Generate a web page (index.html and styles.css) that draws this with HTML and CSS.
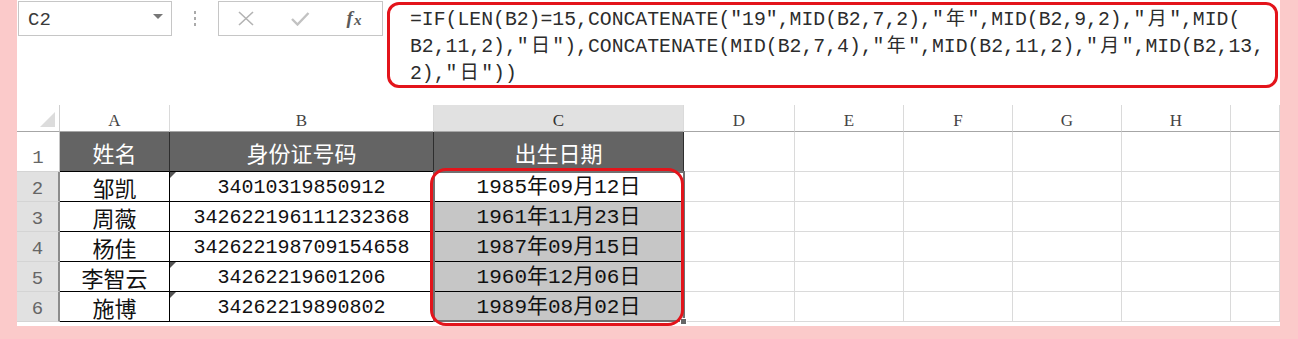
FILE: index.html
```html
<!DOCTYPE html>
<html lang="zh-CN">
<head>
<meta charset="utf-8">
<title>身份证号提取出生日期</title>
<link rel="stylesheet" href="styles.css">
</head>
<body>
<div class="panel">
  <div class="fbar">
    <div class="namebox"><span class="ref">C2</span><span class="caret"></span></div>
    <div class="grip"><i></i><i></i><i></i></div>
    <div class="fbtns">
      <span class="btn"><svg width="18" height="15" viewBox="0 0 18 15"><path d="M2 1 L16 14 M16 1 L2 14" stroke="#b3b3b3" stroke-width="1.6" fill="none"/></svg></span>
      <span class="btn"><svg width="20" height="15" viewBox="0 0 20 15"><path d="M2 8 L7.5 13.5 L18.5 2" stroke="#c2c2c2" stroke-width="2.4" fill="none"/></svg></span>
      <span class="btn fx"><i>f</i><i class="sx">x</i></span>
    </div>
    <div class="formula">
      <div class="fl">=IF(LEN(B2)=15,CONCATENATE("19",MID(B2,7,2),"<span class="w">年</span>",MID(B2,9,2),"<span class="w">月</span>",MID(</div>
      <div class="fl">B2,11,2),"<span class="w">日</span>"),CONCATENATE(MID(B2,7,4),"<span class="w">年</span>",MID(B2,11,2),"<span class="w">月</span>",MID(B2,13,</div>
      <div class="fl">2),"<span class="w">日</span>"))</div>
    </div>
  </div>

  <div class="sheet">
    <div class="cn"></div>
    <div class="ch">A</div><div class="ch">B</div><div class="ch on">C</div><div class="ch">D</div><div class="ch">E</div><div class="ch">F</div><div class="ch">G</div><div class="ch">H</div><div class="ch"></div>

    <div class="rh one">1</div>
    <div class="d t">姓名</div><div class="d t">身份证号码</div><div class="d t">出生日期</div>
    <div class="g"></div><div class="g"></div><div class="g"></div><div class="g"></div><div class="g"></div><div class="g"></div>

    <div class="rh on">2</div>
    <div class="d nm">邹凯</div><div class="d id tri">34010319850912</div><div class="d dt">1985年09月12日</div>
    <div class="g"></div><div class="g"></div><div class="g"></div><div class="g"></div><div class="g"></div><div class="g"></div>

    <div class="rh on">3</div>
    <div class="d nm">周薇</div><div class="d id">342622196111232368</div><div class="d dt s">1961年11月23日</div>
    <div class="g"></div><div class="g"></div><div class="g"></div><div class="g"></div><div class="g"></div><div class="g"></div>

    <div class="rh on">4</div>
    <div class="d nm">杨佳</div><div class="d id">342622198709154658</div><div class="d dt s">1987年09月15日</div>
    <div class="g"></div><div class="g"></div><div class="g"></div><div class="g"></div><div class="g"></div><div class="g"></div>

    <div class="rh on">5</div>
    <div class="d nm">李智云</div><div class="d id tri">34262219601206</div><div class="d dt s">1960年12月06日</div>
    <div class="g"></div><div class="g"></div><div class="g"></div><div class="g"></div><div class="g"></div><div class="g"></div>

    <div class="rh on">6</div>
    <div class="d nm">施博</div><div class="d id tri">34262219890802</div><div class="d dt s">1989年08月02日</div>
    <div class="g"></div><div class="g"></div><div class="g"></div><div class="g"></div><div class="g"></div><div class="g"></div>

    <div class="sel"></div>
    <div class="handle"></div>
    <div class="mark"></div>
  </div>
</div>
</body>
</html>
```

FILE: styles.css
```css
* { box-sizing: border-box; margin: 0; padding: 0; }

body {
  background: #fbcaca;
  width: 1298px;
  height: 339px;
  overflow: hidden;
}

.panel {
  margin-left: 17px;
  width: 1263px;
  height: 326px;
  background: #fff;
}

/* ---------- formula bar ---------- */
.fbar {
  display: flex;
  align-items: flex-start;
  height: 105px;
}

.namebox {
  margin: 1px 0 0 1px;
  width: 154px;
  height: 35px;
  border: 1px solid #c6c6c6;
  display: flex;
  align-items: center;
  justify-content: space-between;
  padding: 0 8px 0 9px;
}

.ref {
  font: 19px "Liberation Mono", monospace;
  color: #3a3a3a;
  padding-top: 2px;
}

.caret {
  width: 0;
  height: 0;
  border-left: 5px solid transparent;
  border-right: 5px solid transparent;
  border-top: 5px solid #777;
  margin-top: -4px;
}

.grip {
  width: 46px;
  height: 35px;
  margin-top: 1px;
  display: flex;
  flex-direction: column;
  align-items: center;
  justify-content: center;
  gap: 3px;
}

.grip i {
  width: 2px;
  height: 3px;
  background: #aaa;
}

.fbtns {
  margin-top: 1px;
  width: 165px;
  height: 35px;
  border: 1px solid #c6c6c6;
  display: grid;
  grid-template-columns: 54px 54px 54px;
  align-items: center;
  justify-items: center;
}

.btn {
  display: flex;
  align-items: center;
  justify-content: center;
}

.fx {
  font: italic bold 19px "Liberation Serif", serif;
  color: #5a5a5a;
  padding-bottom: 2px;
}

.fx .sx {
  font-size: 15px;
  margin-left: 1px;
  position: relative;
  top: 3px;
}

.formula {
  margin: 2px 0 0 4px;
  width: 891px;
  height: 86px;
  border: 3px solid #e3141b;
  border-radius: 12px;
  padding: 2px 0 0 20px;
  font: 19.77px/27px "Liberation Mono", monospace;
  color: #2c2c2c;
  white-space: nowrap;
}

.fl { height: 27px; }

.w {
  display: inline-block;
  width: 23.72px;
  text-align: center;
  font-family: "Noto Sans CJK SC", sans-serif;
  font-size: 19px;
  line-height: 1;
}

/* ---------- sheet ---------- */
.sheet {
  position: relative;
  display: grid;
  grid-template-columns: 43px 110px 264px 250px 111px 109px 109px 109px 109px 49px;
  grid-template-rows: 27px 40px repeat(5, 30px);
}

.cn {
  position: relative;
  border-right: 1px solid #cfcfcf;
  border-bottom: 1px solid #a6a6a6;
}

.cn::after {
  content: "";
  position: absolute;
  right: 4px;
  bottom: 4px;
  border-left: 15px solid transparent;
  border-bottom: 15px solid #dcdcdc;
}

.ch {
  display: flex;
  align-items: center;
  justify-content: center;
  padding-top: 4px;
  font: 17px/1 "Liberation Serif", serif;
  color: #444;
  border-right: 1px solid #dadada;
  border-bottom: 1px solid #a6a6a6;
}

.ch.on {
  background: #e1e1e1;
  color: #333;
}

.rh {
  display: flex;
  align-items: center;
  justify-content: center;
  padding-top: 5px;
  font: 19px/1 "Liberation Mono", monospace;
  color: #666;
  border-right: 1px solid #c6c6c6;
  border-bottom: 1px solid #d4d4d4;
}

.rh.one {
  align-items: flex-end;
  padding: 0 0 3px;
}

.rh.on {
  background: #e1e1e1;
  border-right: 2px solid #8c8c8c;
}

.g {
  border-right: 1px solid #dadada;
  border-bottom: 1px solid #dadada;
}

.d {
  position: relative;
  display: flex;
  align-items: center;
  justify-content: center;
  border-right: 1px solid #000;
  border-bottom: 1px solid #000;
  color: #111;
  line-height: 1;
}

.d.t {
  background: #646464;
  color: #fff;
  border-right-color: #2e2e2e;
  font: 22px/1 "Noto Sans CJK SC", sans-serif;
}

.d.nm {
  font: 22px/1 "Noto Sans CJK SC", sans-serif;
}

.d.id {
  font: 20px/1 "Liberation Mono", monospace;
  padding-top: 3px;
}

.d.dt {
  font: 21px/1 "Liberation Mono", "Noto Sans CJK SC", monospace;
  padding-top: 2px;
}

.d.s { background: #c6c6c6; }

.tri::before {
  content: "";
  position: absolute;
  top: 0;
  left: 0;
  border-top: 6px solid #555;
  border-right: 6px solid transparent;
}

.sel {
  position: absolute;
  left: 416px;
  top: 66px;
  width: 252px;
  height: 151px;
  border: 2px solid #707070;
  pointer-events: none;
}

.handle {
  position: absolute;
  left: 663px;
  top: 213px;
  width: 7px;
  height: 7px;
  background: #666;
  border: 1px solid #fff;
}

.mark {
  position: absolute;
  left: 413px;
  top: 63px;
  width: 254px;
  height: 158px;
  border: 3px solid #e3141b;
  border-radius: 16px;
  pointer-events: none;
}
```
